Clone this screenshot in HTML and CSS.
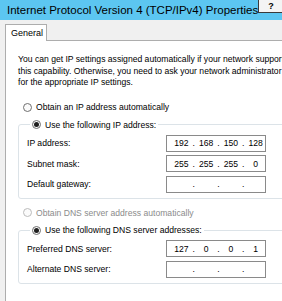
FILE: index.html
```html
<!DOCTYPE html>
<html lang="en">
<head>
  <meta charset="UTF-8" />
  <title>Internet Protocol Version 4 (TCP/IPv4) Properties</title>
  <link rel="stylesheet" href="styles.css">
</head>
<body>
  <div class="titlebar">
    <span class="title">Internet Protocol Version 4 (TCP/IPv4) Properties</span>
    <button class="help">?</button>
  </div>

  <div class="dialog">
    <div class="tabs">
      <div class="tab">General</div>
    </div>

    <div class="panel">
      <p class="intro">
        You can get IP settings assigned automatically if your network supports<br>
        this capability. Otherwise, you need to ask your network administrator<br>
        for the appropriate IP settings.
      </p>

      <label class="radio first">
        <span class="dot"></span>Obtain an IP address automatically
      </label>

      <fieldset class="group">
        <legend class="radio"><span class="dot on"></span>Use the following IP address:</legend>
        <div class="row">
          <span class="label">IP address:</span>
          <div class="ipbox">
            <span class="seg">192</span><span class="sep">.</span><span class="seg">168</span><span class="sep">.</span><span class="seg">150</span><span class="sep">.</span><span class="seg">128</span>
          </div>
        </div>
        <div class="row">
          <span class="label">Subnet mask:</span>
          <div class="ipbox">
            <span class="seg">255</span><span class="sep">.</span><span class="seg">255</span><span class="sep">.</span><span class="seg">255</span><span class="sep">.</span><span class="seg">0</span>
          </div>
        </div>
        <div class="row">
          <span class="label">Default gateway:</span>
          <div class="ipbox">
            <span class="seg"></span><span class="sep">.</span><span class="seg"></span><span class="sep">.</span><span class="seg"></span><span class="sep">.</span><span class="seg"></span>
          </div>
        </div>
      </fieldset>

      <label class="radio disabled">
        <span class="dot"></span>Obtain DNS server address automatically
      </label>

      <fieldset class="group">
        <legend class="radio"><span class="dot on"></span>Use the following DNS server addresses:</legend>
        <div class="row">
          <span class="label">Preferred DNS server:</span>
          <div class="ipbox">
            <span class="seg">127</span><span class="sep">.</span><span class="seg">0</span><span class="sep">.</span><span class="seg">0</span><span class="sep">.</span><span class="seg">1</span>
          </div>
        </div>
        <div class="row">
          <span class="label">Alternate DNS server:</span>
          <div class="ipbox">
            <span class="seg"></span><span class="sep">.</span><span class="seg"></span><span class="sep">.</span><span class="seg"></span><span class="sep">.</span><span class="seg"></span>
          </div>
        </div>
      </fieldset>
    </div>
  </div>
</body>
</html>
```

FILE: styles.css
```css
* {
  box-sizing: border-box;
  margin: 0;
  padding: 0;
}

body {
  font-family: 'Liberation Sans', Arial, sans-serif;
  font-size: 8.6px;
  color: #000;
  background: #f0f0f0;
  overflow: hidden;
  width: 282px;
  height: 301px;
}

.titlebar {
  height: 20px;
  background: #5cc6f1;
  display: flex;
  align-items: flex-start;
  justify-content: space-between;
  padding-left: 7px;
}

.title {
  font-size: 11.5px;
  line-height: 20px;
  white-space: nowrap;
}

.help {
  width: 25px;
  height: 13px;
  margin-right: -1px;
  font-family: 'Liberation Sans', Arial, sans-serif;
  font-size: 9px;
  font-weight: bold;
  line-height: 10px;
  background: #f4f4f4;
  border: none;
  border-left: 1px solid #3a3a3a;
  border-bottom: 1px solid #3a3a3a;
}

.dialog {
  width: 320px;
  padding: 4px 0 0 5px;
}

.tabs {
  display: flex;
  height: 17px;
}

.tab {
  width: 42px;
  height: 17px;
  padding-left: 5px;
  line-height: 16px;
  font-size: 9px;
  background: #fff;
  border: 1px solid #adadad;
  border-bottom: none;
  position: relative;
  z-index: 1;
}

.panel {
  background: #fff;
  border: 1px solid #adadad;
  margin-top: -1px;
  padding: 13px 0 20px 12px;
  height: 270px;
}

.intro {
  line-height: 11.7px;
  white-space: nowrap;
}

.radio {
  display: flex;
  align-items: center;
  white-space: nowrap;
  line-height: 12px;
}

.radio.first {
  margin: 12px 0 0 5px;
}

.radio.disabled {
  color: #8b8b8b;
  margin: 8px 0 0 5px;
}

.dot {
  width: 9px;
  height: 9px;
  border: 1px solid #6f6f6f;
  border-radius: 50%;
  background: #fbfbfb;
  margin-right: 4px;
  display: flex;
  align-items: center;
  justify-content: center;
}

.dot.on::after {
  content: "";
  width: 5px;
  height: 5px;
  border-radius: 50%;
  background: #202020;
}

.disabled .dot {
  border-color: #bcbcbc;
}

.group {
  border: 1px solid #dce3e8;
  border-radius: 3px;
  padding: 4px 0 5px 8px;
  margin-top: 5.5px;
  width: 290px;
}

.group legend {
  padding: 0 2px;
  margin-left: 3px;
}

.row {
  display: flex;
  align-items: center;
  height: 17px;
  margin-bottom: 3.5px;
}

.row:last-child {
  margin-bottom: 0;
}

.label {
  width: 139px;
  white-space: nowrap;
}

.ipbox {
  width: 100px;
  height: 17px;
  border: 1px solid #8a8a8a;
  background: #fff;
  display: flex;
  align-items: center;
  padding-left: 5px;
}

.seg {
  width: 19px;
  text-align: center;
}

.sep {
  width: 6px;
  text-align: center;
}
```
